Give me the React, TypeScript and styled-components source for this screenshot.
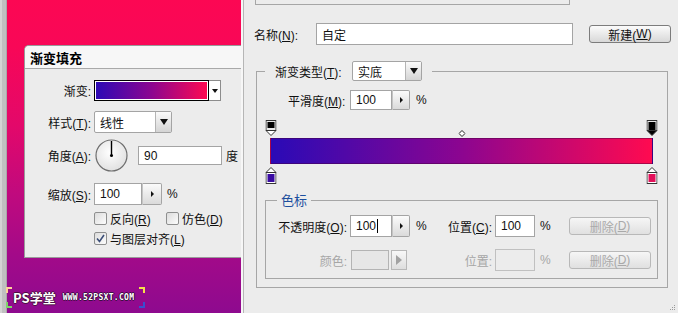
import styled, { createGlobalStyle } from "styled-components";

type ColorStop = { at: number; color: string };
type AlphaStop = { at: number; selected: boolean };

const colorStops: ColorStop[] = [
  { at: 0, color: "#3a0ca3" },
  { at: 1, color: "#e3105a" },
];

const alphaStops: AlphaStop[] = [
  { at: 0, selected: false },
  { at: 1, selected: true },
];

const GRADIENT = "linear-gradient(90deg, #2a0ab6 0%, #8c0590 50%, #ff0a50 100%)";

const GlobalStyle = createGlobalStyle`
  html, body {
    margin: 0;
    padding: 0;
  }
  body {
    background: #ececec;
    font-family: "Liberation Sans", "Noto Sans CJK SC", sans-serif;
    font-size: 12px;
    color: #111;
    overflow: hidden;
  }
`;

const Screen = styled.div`
  display: flex;
  width: 678px;
  height: 313px;
  overflow: hidden;
`;

/* ---------- left: document canvas with the layer style panel ---------- */

const CanvasSide = styled.div`
  display: flex;
  flex: none;
  width: 241px;
`;

const Ruler = styled.div`
  flex: none;
  width: 7px;
  background: linear-gradient(90deg, #d4d4d4 0 2px, #c0c0c0 2px 6px, #a8a8a8 6px);
`;

const Canvas = styled.div`
  flex: 1;
  display: flex;
  flex-direction: column;
  background: linear-gradient(
    180deg,
    #fc0753 0%,
    #f80757 15%,
    #e3086a 40%,
    #c00a7e 62%,
    #a20a89 82%,
    #8e0a8f 100%
  );
`;

const FloatPanel = styled.section`
  box-sizing: border-box;
  margin: 45px 0 0 17px;
  width: 217px;
  height: 213px;
  background: #ececec;
  border: 1px solid #9a9a9a;
  border-right: none;
  border-top-left-radius: 5px;
  overflow: hidden;
`;

const PanelTitle = styled.div`
  height: 22px;
  padding-left: 5px;
  display: flex;
  align-items: center;
  background: #f7f7f7;
  border-bottom: 1px solid #a9a9a9;
  font-size: 13px;
  font-weight: bold;
  color: #000;
`;

const FieldRow = styled.div<{ $top: number }>`
  display: flex;
  align-items: center;
  margin-top: ${(p) => p.$top}px;
`;

const FieldLabel = styled.span<{ $w: number; $off?: boolean; $left?: boolean }>`
  box-sizing: border-box;
  flex: none;
  width: ${(p) => p.$w}px;
  padding-right: 3px;
  text-align: ${(p) => (p.$left ? "left" : "right")};
  white-space: nowrap;
  color: ${(p) => (p.$off ? "#a6a6a6" : "#111")};
`;

const Swatch = styled.div`
  display: flex;
  height: 21px;
`;

const SwatchFill = styled.div`
  box-sizing: border-box;
  width: 115px;
  border: 1px solid #000;
  box-shadow: inset 0 0 0 1px #fff;
  background: ${GRADIENT};
`;

const SwatchArrow = styled.div`
  box-sizing: border-box;
  width: 12px;
  display: flex;
  align-items: center;
  justify-content: center;
  background: #fff;
  border: 1px solid #8c8c8c;
  border-left: none;

  &::after {
    content: "";
    border-top: 4px solid #111;
    border-left: 3px solid transparent;
    border-right: 3px solid transparent;
  }
`;

const Field = styled.div<{ $w: number; $h?: number; $off?: boolean }>`
  box-sizing: border-box;
  flex: none;
  display: flex;
  align-items: center;
  width: ${(p) => p.$w}px;
  height: ${(p) => p.$h ?? 22}px;
  padding-left: 5px;
  border: 1px solid ${(p) => (p.$off ? "#c0c0c0" : "#a4a4a4")};
  background: ${(p) => (p.$off ? "#ececec" : "#fff")};
  color: #111;
`;

const Caret = styled.span`
  display: inline-block;
  width: 1px;
  height: 14px;
  margin-left: 1px;
  background: #000;
`;

const Spin = styled.div<{ $h?: number; $w?: number }>`
  box-sizing: border-box;
  flex: none;
  display: flex;
  align-items: center;
  justify-content: center;
  width: ${(p) => p.$w ?? 18}px;
  height: ${(p) => p.$h ?? 22}px;
  border: 1px solid #a4a4a4;
  border-left: 1px solid #c4c4c4;
  border-radius: 0 2px 2px 0;
  background: linear-gradient(#fbfbfb, #dadada);

  &::after {
    content: "";
    border-left: 3px solid #111;
    border-top: 3px solid transparent;
    border-bottom: 3px solid transparent;
  }
`;

const Unit = styled.span<{ $gap: number; $w?: number; $off?: boolean }>`
  box-sizing: border-box;
  flex: none;
  width: ${(p) => (p.$w ? `${p.$w}px` : "auto")};
  padding-left: ${(p) => p.$gap}px;
  color: ${(p) => (p.$off ? "#a6a6a6" : "#111")};
`;

const Select = styled.div<{ $w: number; $h: number }>`
  box-sizing: border-box;
  flex: none;
  display: flex;
  align-items: center;
  width: ${(p) => p.$w}px;
  height: ${(p) => p.$h}px;
  border: 1px solid #a4a4a4;
  border-radius: 2px;
  background: #fff;
`;

const SelectText = styled.span`
  flex: 1;
  padding-left: 5px;
`;

const SelectArrow = styled.span`
  align-self: stretch;
  width: 15px;
  display: flex;
  align-items: center;
  justify-content: center;
  border-left: 1px solid #b4b4b4;
  background: linear-gradient(#fafafa, #d4d4d4);

  &::after {
    content: "";
    border-top: 6px solid #111;
    border-left: 4px solid transparent;
    border-right: 4px solid transparent;
  }
`;

const Dial = styled.svg`
  flex: none;
  display: block;
`;

const CheckRow = styled.div<{ $top: number }>`
  display: flex;
  align-items: center;
  height: 13px;
  margin-top: ${(p) => p.$top}px;
  padding-left: 69px;
`;

const CheckItem = styled.label<{ $w?: number }>`
  display: flex;
  align-items: center;
  gap: 3px;
  width: ${(p) => (p.$w ? `${p.$w}px` : "auto")};
  white-space: nowrap;
`;

const Box = styled.span`
  box-sizing: border-box;
  display: flex;
  align-items: center;
  justify-content: center;
  width: 13px;
  height: 13px;
  border: 1px solid #8e8f8f;
  border-radius: 2px;
  background: linear-gradient(135deg, #dcdcdc, #fdfdfd);
`;

const Watermark = styled.div`
  position: relative;
  display: flex;
  align-items: center;
  gap: 7px;
  width: 139px;
  height: 21px;
  margin: 29px 0 0 -1px;
  padding-left: 7px;
  box-sizing: border-box;
`;

const WmTitle = styled.span`
  font-size: 13px;
  font-weight: bold;
  color: #fff;
  font-family: "Noto Sans CJK SC", sans-serif;
  text-shadow: 1px 0 #4a1040, -1px 0 #4a1040, 0 1px #4a1040, 0 -1px #4a1040;
`;

const WmUrl = styled.span`
  font-family: "DejaVu Sans Mono", monospace;
  font-size: 8px;
  font-weight: bold;
  letter-spacing: 0.3px;
  color: #fff;
  text-shadow: 1px 0 #3a1040, -1px 0 #3a1040, 0 1px #3a1040, 0 -1px #3a1040;
`;

const Corner = styled.span<{ $pos: "tl" | "tr" | "bl" | "br"; $c: string }>`
  position: absolute;
  width: 4px;
  height: 4px;
  ${(p) => (p.$pos[0] === "t" ? "top: 0;" : "bottom: 0;")}
  ${(p) => (p.$pos[1] === "l" ? "left: 0;" : "right: 0;")}
  border-${(p) => (p.$pos[0] === "t" ? "top" : "bottom")}: 2px solid ${(p) => p.$c};
  border-${(p) => (p.$pos[1] === "l" ? "left" : "right")}: 2px solid ${(p) => p.$c};
`;

const Divider = styled.div`
  flex: none;
  width: 2px;
  background: #f7f7f7;
  border-right: 1px solid #b6b6b6;
`;

/* ---------- right: gradient editor dialog ---------- */

const Dialog = styled.div`
  position: relative;
  flex: 1;
  display: flex;
  flex-direction: column;
  align-items: flex-start;
  background: #ececec;
`;

const PresetBox = styled.div`
  box-sizing: border-box;
  width: 315px;
  height: 5px;
  margin-left: 11px;
  border: 1px solid #a6a6a6;
  border-top: none;
`;

const NameRow = styled.div`
  display: flex;
  align-items: center;
  margin-top: 18px;
  padding-left: 10px;
`;

const PushButton = styled.div<{ $off?: boolean; $gap?: number }>`
  box-sizing: border-box;
  flex: none;
  display: flex;
  align-items: center;
  justify-content: center;
  width: 82px;
  height: 18px;
  margin-left: ${(p) => p.$gap ?? 0}px;
  border: 1px solid ${(p) => (p.$off ? "#b8b8b8" : "#7c7c7c")};
  border-radius: 3px;
  background: ${(p) =>
    p.$off ? "linear-gradient(#f6f6f6, #e0e0e0)" : "linear-gradient(#fbfbfb, #d8d8d8)"};
  color: ${(p) => (p.$off ? "#a9a9a9" : "#111")};
`;

const Group = styled.fieldset`
  box-sizing: border-box;
  width: 412px;
  margin: 16px 0 0 12px;
  padding: 0 9px 8px 8px;
  border: 1px solid #a6a6a6;
  min-inline-size: 0;
`;

const GroupLegend = styled.legend`
  padding: 0 10px;
  height: 20px;
`;

const LegendInner = styled.div`
  display: flex;
  align-items: center;
  height: 20px;
`;

const SmoothRow = styled.div`
  display: flex;
  align-items: center;
  margin-top: 9px;
  padding-left: 23px;
`;

const Editor = styled.div`
  position: relative;
  width: 383px;
  height: 64px;
  box-sizing: border-box;
  margin: 10px 0 0 5px;
  padding-top: 18px;
`;

const Bar = styled.div`
  box-sizing: border-box;
  height: 26px;
  border: 1px solid rgba(70, 0, 60, 0.45);
  background: ${GRADIENT};
`;

const Marker = styled.div<{ $row: "top" | "mid" | "bottom" }>`
  position: absolute;
  top: ${(p) => (p.$row === "top" ? 0 : p.$row === "mid" ? 10 : 47)}px;
  transform: translateX(-50%);
  line-height: 0;
`;

const StopSet = styled.fieldset`
  box-sizing: border-box;
  width: 393px;
  margin: 8px 0 0 0;
  padding: 0 9px 7px 9px;
  border: 1px solid #a6a6a6;
  min-inline-size: 0;
`;

const StopLegend = styled.legend`
  margin-left: 2px;
  padding: 0 4px;
  height: 16px;
  line-height: 16px;
  font-size: 13px;
  color: #1d4f9e;
  font-family: "Noto Sans CJK SC", sans-serif;
`;

const StopRow = styled.div<{ $top: number }>`
  display: flex;
  align-items: center;
  height: 22px;
  margin-top: ${(p) => p.$top}px;
`;

const ColorPick = styled.div`
  flex: none;
  display: flex;
  align-items: center;
  gap: 2px;
  width: 60px;
  height: 20px;
  padding-left: 1px;
  box-sizing: border-box;
`;

const ColorWell = styled.div`
  box-sizing: border-box;
  width: 38px;
  height: 20px;
  border: 1px solid #b3b3b3;
  background: #e6e6e6;
`;

const ColorArrow = styled.div`
  box-sizing: border-box;
  width: 16px;
  height: 20px;
  display: flex;
  align-items: center;
  justify-content: center;
  border: 1px solid #b8b8b8;
  background: linear-gradient(#f8f8f8, #dedede);

  &::after {
    content: "";
    border-left: 6px solid #a2a2a2;
    border-top: 5px solid transparent;
    border-bottom: 5px solid transparent;
  }
`;

const Grip = styled.svg`
  position: absolute;
  right: 2px;
  bottom: 2px;
`;

function AlphaStopIcon({ selected }: { selected: boolean }) {
  return (
    <svg width="11" height="16" viewBox="0 0 11 16">
      <rect x="0.5" y="0.5" width="10" height="10" fill="#e8e8e8" stroke="#333" />
      <rect x="2" y="2" width="7" height={selected ? 8 : 6} fill="#000" />
      <polygon
        points="0.5,10.5 10.5,10.5 5.5,15.5"
        fill={selected ? "#000" : "#fff"}
        stroke="#333"
      />
    </svg>
  );
}

function ColorStopIcon({ color }: { color: string }) {
  return (
    <svg width="11" height="17" viewBox="0 0 11 17">
      <polygon points="5.5,0.5 10.5,5.5 0.5,5.5" fill="#fff" stroke="#333" />
      <rect x="0.5" y="5.5" width="10" height="11" fill="#fff" stroke="#333" />
      <rect x="2" y="7" width="7" height="8" fill={color} />
    </svg>
  );
}

function CheckMark() {
  return (
    <svg width="9" height="9" viewBox="0 0 9 9">
      <path d="M1 4.5 L3.5 7.5 L8 1" fill="none" stroke="#3c4f78" strokeWidth="1.6" />
    </svg>
  );
}

function GradientFillPanel() {
  return (
    <FloatPanel>
      <PanelTitle>渐变填充</PanelTitle>
      <FieldRow $top={11}>
        <FieldLabel $w={69}>渐变:</FieldLabel>
        <Swatch>
          <SwatchFill />
          <SwatchArrow />
        </Swatch>
      </FieldRow>
      <FieldRow $top={10}>
        <FieldLabel $w={69}>
          样式(<u>T</u>):
        </FieldLabel>
        <Select $w={78} $h={22}>
          <SelectText>线性</SelectText>
          <SelectArrow />
        </Select>
      </FieldRow>
      <FieldRow $top={6}>
        <FieldLabel $w={69}>
          角度(<u>A</u>):
        </FieldLabel>
        <Dial width="35" height="33" viewBox="0 0 35 33">
          <defs>
            <radialGradient id="dialFace" cx="0.45" cy="0.4" r="0.7">
              <stop offset="0" stopColor="#ffffff" />
              <stop offset="1" stopColor="#dcdcdc" />
            </radialGradient>
          </defs>
          <circle cx="17.5" cy="16.5" r="15.5" fill="url(#dialFace)" stroke="#6e6e6e" strokeWidth="1.2" />
          <line x1="17.5" y1="16.5" x2="17.5" y2="2" stroke="#000" strokeWidth="1.4" />
          <circle cx="17.5" cy="16.5" r="1.5" fill="#000" />
        </Dial>
        <Field $w={84} $h={19} style={{ marginLeft: 9 }}>
          90
        </Field>
        <Unit $gap={4}>度</Unit>
      </FieldRow>
      <FieldRow $top={11}>
        <FieldLabel $w={69}>
          缩放(<u>S</u>):
        </FieldLabel>
        <Field $w={48}>100</Field>
        <Spin $w={20} />
        <Unit $gap={5}>%</Unit>
      </FieldRow>
      <CheckRow $top={7}>
        <CheckItem $w={72}>
          <Box />
          <span>
            反向(<u>R</u>)
          </span>
        </CheckItem>
        <CheckItem>
          <Box />
          <span>
            仿色(<u>D</u>)
          </span>
        </CheckItem>
      </CheckRow>
      <CheckRow $top={7}>
        <CheckItem>
          <Box>
            <CheckMark />
          </Box>
          <span>
            与图层对齐(<u>L</u>)
          </span>
        </CheckItem>
      </CheckRow>
    </FloatPanel>
  );
}

function GradientEditor() {
  return (
    <Editor>
      {alphaStops.map((s, i) => (
        <Marker key={`a${i}`} $row="top" style={{ left: `calc(1px + ${s.at} * (100% - 2px))` }}>
          <AlphaStopIcon selected={s.selected} />
        </Marker>
      ))}
      <Marker $row="mid" style={{ left: "50%" }}>
        <svg width="7" height="7" viewBox="0 0 7 7">
          <polygon points="3.5,0.5 6.5,3.5 3.5,6.5 0.5,3.5" fill="#fff" stroke="#222" />
        </svg>
      </Marker>
      <Bar />
      {colorStops.map((s, i) => (
        <Marker key={`c${i}`} $row="bottom" style={{ left: `calc(1px + ${s.at} * (100% - 2px))` }}>
          <ColorStopIcon color={s.color} />
        </Marker>
      ))}
    </Editor>
  );
}

export default function App() {
  return (
    <>
      <GlobalStyle />
      <Screen>
        <CanvasSide>
          <Ruler />
          <Canvas>
            <GradientFillPanel />
            <Watermark>
              <Corner $pos="tl" $c="#ffd39a" />
              <Corner $pos="bl" $c="#7fd36a" />
              <Corner $pos="tr" $c="#f5e04a" />
              <Corner $pos="br" $c="#3a4fd0" />
              <WmTitle>PS学堂</WmTitle>
              <WmUrl>WWW.52PSXT.COM</WmUrl>
            </Watermark>
          </Canvas>
        </CanvasSide>
        <Divider />
        <Dialog>
          <PresetBox />
          <NameRow>
            <FieldLabel $w={62} $left>
              名称(<u>N</u>):
            </FieldLabel>
            <Field $w={257}>自定</Field>
            <PushButton $gap={16}>
              新建(<u>W</u>)
            </PushButton>
          </NameRow>
          <Group>
            <GroupLegend>
              <LegendInner>
                <FieldLabel $w={77} $left>
                  渐变类型(<u>T</u>):
                </FieldLabel>
                <Select $w={70} $h={20}>
                  <SelectText>实底</SelectText>
                  <SelectArrow />
                </Select>
              </LegendInner>
            </GroupLegend>
            <SmoothRow>
              <FieldLabel $w={62} $left>
                平滑度(<u>M</u>):
              </FieldLabel>
              <Field $w={42} $h={20}>
                100
              </Field>
              <Spin $h={20} />
              <Unit $gap={6}>%</Unit>
            </SmoothRow>
            <GradientEditor />
            <StopSet>
              <StopLegend>色标</StopLegend>
              <StopRow $top={7}>
                <FieldLabel $w={75}>
                  不透明度(<u>O</u>):
                </FieldLabel>
                <Field $w={42}>
                  100
                  <Caret />
                </Field>
                <Spin />
                <Unit $gap={6} $w={35}>
                  %
                </Unit>
                <FieldLabel $w={50}>
                  位置(<u>C</u>):
                </FieldLabel>
                <Field $w={40}>100</Field>
                <Unit $gap={5} $w={34}>
                  %
                </Unit>
                <PushButton $off>
                  删除(<u>D</u>)
                </PushButton>
              </StopRow>
              <StopRow $top={12}>
                <FieldLabel $w={75} $off>
                  颜色:
                </FieldLabel>
                <ColorPick>
                  <ColorWell />
                  <ColorArrow />
                </ColorPick>
                <Unit $gap={6} $w={35} />
                <FieldLabel $w={50} $off>
                  位置:
                </FieldLabel>
                <Field $w={40} $off />
                <Unit $gap={5} $w={34} $off>
                  %
                </Unit>
                <PushButton $off>
                  删除(<u>D</u>)
                </PushButton>
              </StopRow>
            </StopSet>
          </Group>
          <Grip width="8" height="8" viewBox="0 0 8 8">
            <rect x="6" y="2" width="1" height="1" fill="#9a9a9a" />
            <rect x="4" y="4" width="1" height="1" fill="#9a9a9a" />
            <rect x="6" y="4" width="1" height="1" fill="#9a9a9a" />
            <rect x="2" y="6" width="1" height="1" fill="#9a9a9a" />
            <rect x="4" y="6" width="1" height="1" fill="#9a9a9a" />
            <rect x="6" y="6" width="1" height="1" fill="#9a9a9a" />
          </Grip>
        </Dialog>
      </Screen>
    </>
  );
}
